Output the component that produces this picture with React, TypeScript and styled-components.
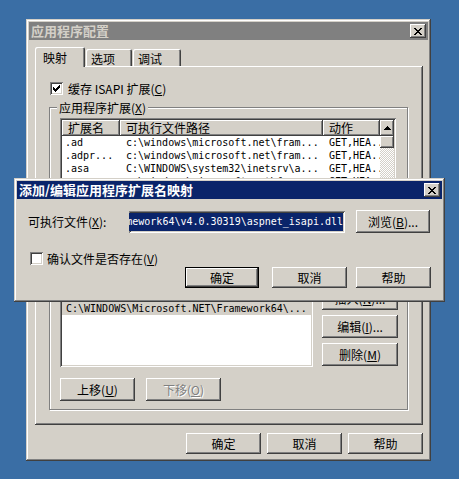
import React from "react";
import styled, {createGlobalStyle, css} from "styled-components";

const FACE = "#d4d0c8";

interface IExtension {
    ext: string,
    path: string,
    verbs: string
}

const COLUMNS = [
    {title: "扩展名", width: 58, indent: 3},
    {title: "可执行文件路径", width: 203, indent: 6},
    {title: "动作", width: 57, indent: 6}
];

const EXTENSIONS: IExtension[] = [
    {ext: ".ad", path: "c:\\windows\\microsoft.net\\fram...", verbs: "GET,HEA..."},
    {ext: ".adpr...", path: "c:\\windows\\microsoft.net\\fram...", verbs: "GET,HEA..."},
    {ext: ".asa", path: "C:\\WINDOWS\\system32\\inetsrv\\a...", verbs: "GET,HEA..."},
    {ext: ".asax", path: "c:\\windows\\microsoft.net\\fram...", verbs: "GET,HEA..."},
    {ext: ".ascx", path: "c:\\windows\\microsoft.net\\fram...", verbs: "GET,HEA..."},
    {ext: ".ashx", path: "c:\\windows\\microsoft.net\\fram...", verbs: "GET,HEA..."},
    {ext: ".asmx", path: "c:\\windows\\microsoft.net\\fram...", verbs: "GET,HEA..."},
    {ext: ".asp", path: "C:\\WINDOWS\\system32\\inetsrv\\a...", verbs: "GET,HEA..."}
];

const WILDCARDS = [
    "C:\\WINDOWS\\system32\\inetsrv\\wildcard.dll",
    "C:\\WINDOWS\\Microsoft.NET\\Framework64\\..."
];

const CLOSE_X = [
    "##....##",
    ".##..##.",
    "..####..",
    "...##...",
    "..####..",
    ".##..##.",
    "##....##"
];

const CHECK = [
    "......#",
    ".....##",
    "#...###",
    "##.###.",
    "#####..",
    ".###...",
    "..#...."
];

const ARROW_UP = [
    "...#...",
    "..###..",
    ".#####.",
    "#######"
];

const ARROW_DOWN = [...ARROW_UP].reverse();

const GlobalStyle = createGlobalStyle`
    html, body {
        margin: 0;
        padding: 0;
        background: #3a6ea5;
    }
`;

const raised = css`
    box-shadow: inset -1px -1px #404040, inset 1px 1px #ffffff, inset -2px -2px #808080, inset 2px 2px ${FACE};
`,

    sunken = css`
        box-shadow: inset 1px 1px #808080, inset -1px -1px #ffffff, inset 2px 2px #404040, inset -2px -2px ${FACE};
`,

    Desktop = styled.div`
        position: relative;
        width: 459px;
        height: 479px;
        overflow: hidden;
        background: #3a6ea5;
        font-family: "Noto Sans CJK SC", sans-serif;
        font-size: 12px;
        color: #000;
`,

    Window = styled.div<{$x: number, $y: number, $w: number, $h: number}>`
        position: absolute;
        left: ${(p) => p.$x}px;
        top: ${(p) => p.$y}px;
        width: ${(p) => p.$w}px;
        height: ${(p) => p.$h}px;
        box-sizing: border-box;
        padding: 3px;
        display: flex;
        flex-direction: column;
        background: ${FACE};
        box-shadow: inset -1px -1px #404040, inset 1px 1px ${FACE}, inset -2px -2px #808080, inset 2px 2px #ffffff;
`,

    TitleBar = styled.div<{$active?: boolean}>`
        flex: none;
        height: 18px;
        display: flex;
        align-items: center;
        justify-content: space-between;
        padding: 0 2px;
        background: ${(p) => (p.$active ? "#0a246a" : "#808080")};
        color: ${(p) => (p.$active ? "#ffffff" : FACE)};
        font-size: 13px;
        font-weight: bold;
        line-height: 18px;
        white-space: nowrap;
`,

    CloseButton = styled.div`
        width: 16px;
        height: 14px;
        display: flex;
        align-items: center;
        justify-content: center;
        background: ${FACE};
        ${raised}
`,

    Svg = styled.svg`
        display: block;
`,

    SheetBody = styled.div`
        flex: 1;
        display: flex;
        flex-direction: column;
        padding: 7px 5px 4px 6px;
`,

    TabStrip = styled.div`
        height: 19px;
        display: flex;
        align-items: flex-end;
`,

    Tab = styled.div<{$selected?: boolean, $width: number, $gap?: number}>`
        position: relative;
        box-sizing: border-box;
        width: ${(p) => p.$width}px;
        margin-left: ${(p) => p.$gap || 0}px;
        height: ${(p) => (p.$selected ? 20 : 17)}px;
        margin-bottom: ${(p) => (p.$selected ? -1 : 0)}px;
        padding: ${(p) => (p.$selected ? "4px 0 0 8px" : "3px 0 0 5px")};
        line-height: 14px;
        background: ${FACE};
        border-radius: 2px 2px 0 0;
        box-shadow: inset 1px 1px #ffffff, inset -1px 0 #404040, inset -2px 0 #808080;
`,

    TabPanel = styled.div`
        height: 359px;
        box-sizing: border-box;
        padding: 16px 15px 0 14px;
        display: flex;
        flex-direction: column;
        box-shadow: inset -1px -1px #404040, inset 1px 1px #ffffff, inset -2px -2px #808080;
`,

    CheckRow = styled.label<{$indent: number}>`
        display: flex;
        align-items: center;
        gap: ${(p) => (p.$indent > 1 ? 4 : 5)}px;
        margin-left: ${(p) => p.$indent}px;
        height: 13px;
        line-height: 13px;
        white-space: nowrap;
`,

    CheckBox = styled.span`
        flex: none;
        width: 13px;
        height: 13px;
        box-sizing: border-box;
        display: flex;
        align-items: center;
        justify-content: center;
        background: #ffffff;
        ${sunken}
`,

    GroupBox = styled.div<{$top: number, $pad: string}>`
        position: relative;
        margin-top: ${(p) => p.$top}px;
        padding: ${(p) => p.$pad};
        border: 1px solid #808080;
        box-shadow: inset 1px 1px #ffffff, 1px 1px #ffffff;
`,

    GroupLabel = styled.span`
        position: absolute;
        top: -8px;
        left: 7px;
        padding: 0 2px;
        line-height: 15px;
        background: ${FACE};
        white-space: nowrap;
`,

    ListView = styled.div`
        height: 118px;
        box-sizing: border-box;
        padding: 2px;
        display: flex;
        background: #ffffff;
        ${sunken}
`,

    ListColumns = styled.div`
        flex: 1;
        overflow: hidden;
        display: flex;
        flex-direction: column;
`,

    HeaderRow = styled.div`
        flex: none;
        height: 16px;
        display: flex;
`,

    HeaderCell = styled.div<{$width: number}>`
        flex: none;
        width: ${(p) => p.$width}px;
        box-sizing: border-box;
        padding-left: 6px;
        line-height: 16px;
        overflow: hidden;
        white-space: nowrap;
        background: ${FACE};
        ${raised}
`,

    ListRow = styled.div<{$selected?: boolean}>`
        flex: none;
        height: 13px;
        display: flex;
        background: ${(p) => (p.$selected ? FACE : "transparent")};
`,

    ListCell = styled.div<{$width?: number, $indent: number}>`
        flex: ${(p) => (p.$width ? "none" : "1")};
        width: ${(p) => (p.$width ? `${p.$width}px` : "auto")};
        box-sizing: border-box;
        padding-left: ${(p) => p.$indent}px;
        overflow: hidden;
        white-space: nowrap;
        font-family: "DejaVu Sans Mono", "Liberation Mono", monospace;
        font-size: 10px;
        line-height: 13px;
`,

    ScrollBar = styled.div`
        flex: none;
        width: 14px;
        display: flex;
        flex-direction: column;
        background: repeating-conic-gradient(${FACE} 0 25%, #ffffff 0 50%) 0 0 / 2px 2px;
`,

    ScrollButton = styled.div`
        flex: none;
        height: 16px;
        display: flex;
        align-items: center;
        justify-content: center;
        background: ${FACE};
        ${raised}
`,

    ScrollThumb = styled.div`
        flex: none;
        height: 12px;
        background: ${FACE};
        ${raised}
`,

    ScrollTrack = styled.div`
        flex: 1;
`,

    ButtonRow = styled.div<{$top: number, $gap: number, $end?: boolean}>`
        display: flex;
        justify-content: ${(p) => (p.$end ? "flex-end" : "flex-start")};
        gap: ${(p) => p.$gap}px;
        margin-top: ${(p) => p.$top}px;
`,

    ButtonColumn = styled.div`
        display: flex;
        flex-direction: column;
        gap: 5px;
`,

    Button = styled.button<{$width: number, $height: number, $default?: boolean, $after?: number}>`
        flex: none;
        width: ${(p) => p.$width}px;
        height: ${(p) => p.$height}px;
        margin: 0 ${(p) => p.$after || 0}px 0 0;
        padding: 0;
        border: 0;
        box-sizing: border-box;
        display: flex;
        align-items: center;
        justify-content: center;
        background: ${FACE};
        color: #000000;
        font: inherit;
        line-height: 14px;
        white-space: nowrap;
        ${raised}
        ${(p) => p.$default && css`
            box-shadow: inset 0 0 0 1px #000000, inset -2px -2px #404040, inset 2px 2px #ffffff, inset -3px -3px #808080, inset 3px 3px ${FACE};
        `}

        &:disabled {
            color: #808080;
            text-shadow: 1px 1px #ffffff;
        }
`,

    Key = styled.u`
        text-decoration: underline;
        text-underline-offset: 1px;
`,

    WildcardRow = styled.div`
        display: flex;
        gap: 9px;
`,

    ListBox = styled.div`
        width: 253px;
        height: 80px;
        box-sizing: border-box;
        padding: 2px;
        background: #ffffff;
        ${sunken}
`,

    DialogBody = styled.div`
        flex: 1;
        display: flex;
        flex-direction: column;
        padding: 11px 11px 0 11px;
`,

    FieldRow = styled.div`
        height: 23px;
        display: flex;
        align-items: center;
`,

    FieldLabel = styled.span`
        flex: none;
        width: 101px;
        white-space: nowrap;
`,

    TextBox = styled.div`
        flex: none;
        width: 216px;
        height: 22px;
        margin-right: 11px;
        box-sizing: border-box;
        padding: 2px;
        display: flex;
        justify-content: flex-end;
        overflow: hidden;
        background: #ffffff;
        ${sunken}
`,

    Selection = styled.span`
        flex: none;
        background: #0a246a;
        color: #ffffff;
        font-family: "DejaVu Sans Mono", "Liberation Mono", monospace;
        font-size: 10px;
        line-height: 18px;
        white-space: nowrap;
`,

    Spacer = styled.div<{$h: number}>`
        height: ${(p) => p.$h}px;
        flex: none;
`;

const PixelIcon = ({rows}: {rows: string[]}) => (
    <Svg width={rows[0].length} height={rows.length} shapeRendering="crispEdges">
        {rows.map((row, y) => row.split("").map((c, x) => (c === "#"
            ? <rect key={`${x}-${y}`} x={x} y={y} width={1} height={1} fill="#000000" />
            : null)))}
    </Svg>
);

const Caption = ({title, active}: {title: string, active?: boolean}) => (
    <TitleBar $active={active}>
        <span>
            {title}
        </span>
        <CloseButton>
            <PixelIcon rows={CLOSE_X} />
        </CloseButton>
    </TitleBar>
);

const Label = ({text, hotkey, tail = ""}: {text: string, hotkey: string, tail?: string}) => (
    <span>
        {text}
        (
        <Key>
            {hotkey}
        </Key>
        )
        {tail}
    </span>
);

const ExtensionList = () => (
    <ListView>
        <ListColumns>
            <HeaderRow>
                {COLUMNS.map((col) => (
                    <HeaderCell key={col.title} $width={col.width}>
                        {col.title}
                    </HeaderCell>
                ))}
            </HeaderRow>
            {EXTENSIONS.map((item) => (
                <ListRow key={item.ext + item.path}>
                    <ListCell $width={COLUMNS[0].width} $indent={COLUMNS[0].indent}>
                        {item.ext}
                    </ListCell>
                    <ListCell $width={COLUMNS[1].width} $indent={COLUMNS[1].indent}>
                        {item.path}
                    </ListCell>
                    <ListCell $width={COLUMNS[2].width} $indent={COLUMNS[2].indent}>
                        {item.verbs}
                    </ListCell>
                </ListRow>
            ))}
        </ListColumns>
        <ScrollBar>
            <ScrollButton>
                <PixelIcon rows={ARROW_UP} />
            </ScrollButton>
            <ScrollThumb />
            <ScrollTrack />
            <ScrollButton>
                <PixelIcon rows={ARROW_DOWN} />
            </ScrollButton>
        </ScrollBar>
    </ListView>
);

const AppConfigDialog = () => (
    <Window $x={26} $y={19} $w={405} $h={442}>
        <Caption title="应用程序配置" />
        <SheetBody>
            <TabStrip>
                <Tab $selected $width={50}>
                    映射
                </Tab>
                <Tab $width={46} $gap={1}>
                    选项
                </Tab>
                <Tab $width={48} $gap={1}>
                    调试
                </Tab>
            </TabStrip>
            <TabPanel>
                <CheckRow $indent={1}>
                    <CheckBox>
                        <PixelIcon rows={CHECK} />
                    </CheckBox>
                    <Label text="缓存 ISAPI 扩展" hotkey="C" />
                </CheckRow>
                <GroupBox $top={12} $pad="10px 11px 5px 10px">
                    <GroupLabel>
                        <Label text="应用程序扩展" hotkey="X" />
                    </GroupLabel>
                    <ExtensionList />
                    <ButtonRow $top={4} $gap={5} $end>
                        <Button $width={76} $height={23}>
                            <Label text="添加" hotkey="D" tail="..." />
                        </Button>
                        <Button $width={76} $height={23}>
                            <Label text="编辑" hotkey="E" tail="..." />
                        </Button>
                        <Button $width={76} $height={23}>
                            <Label text="删除" hotkey="R" />
                        </Button>
                    </ButtonRow>
                </GroupBox>
                <GroupBox $top={6} $pad="11px 9px 8px 10px">
                    <GroupLabel>
                        <Label text="通配符应用程序映射(执行顺序)" hotkey="W" />
                    </GroupLabel>
                    <WildcardRow>
                        <ListBox>
                            {WILDCARDS.map((path, i) => (
                                <ListRow key={path} $selected={i === 1}>
                                    <ListCell $indent={4}>
                                        {path}
                                    </ListCell>
                                </ListRow>
                            ))}
                        </ListBox>
                        <ButtonColumn>
                            <Button $width={76} $height={23}>
                                <Label text="插入" hotkey="N" tail="..." />
                            </Button>
                            <Button $width={76} $height={23}>
                                <Label text="编辑" hotkey="I" tail="..." />
                            </Button>
                            <Button $width={76} $height={23}>
                                <Label text="删除" hotkey="M" />
                            </Button>
                        </ButtonColumn>
                    </WildcardRow>
                    <ButtonRow $top={11} $gap={11}>
                        <Button $width={75} $height={23}>
                            <Label text="上移" hotkey="U" />
                        </Button>
                        <Button $width={75} $height={23} disabled>
                            <Label text="下移" hotkey="O" />
                        </Button>
                    </ButtonRow>
                </GroupBox>
            </TabPanel>
            <ButtonRow $top={8} $gap={6} $end>
                <Button $width={75} $height={21}>
                    确定
                </Button>
                <Button $width={75} $height={21}>
                    取消
                </Button>
                <Button $width={75} $height={21}>
                    帮助
                </Button>
            </ButtonRow>
        </SheetBody>
    </Window>
);

const MappingDialog = () => (
    <Window $x={14} $y={178} $w={431} $h={124}>
        <Caption title="添加/编辑应用程序扩展名映射" active />
        <DialogBody>
            <FieldRow>
                <FieldLabel>
                    <Label text="可执行文件" hotkey="X" tail=":" />
                </FieldLabel>
                <TextBox>
                    <Selection>
                        C:\WINDOWS\Microsoft.NET\Framework64\v4.0.30319\aspnet_isapi.dll
                    </Selection>
                </TextBox>
                <Button $width={74} $height={23}>
                    <Label text="浏览" hotkey="B" tail="..." />
                </Button>
            </FieldRow>
            <Spacer $h={19} />
            <CheckRow $indent={2}>
                <CheckBox />
                <Label text="确认文件是否存在" hotkey="V" />
            </CheckRow>
            <ButtonRow $top={2} $gap={9} $end>
                <Button $width={74} $height={21} $default $after={4}>
                    确定
                </Button>
                <Button $width={75} $height={21}>
                    取消
                </Button>
                <Button $width={75} $height={21}>
                    帮助
                </Button>
            </ButtonRow>
        </DialogBody>
    </Window>
);

const App = () => (
    <Desktop>
        <GlobalStyle />
        <AppConfigDialog />
        <MappingDialog />
    </Desktop>
);

export default App;
